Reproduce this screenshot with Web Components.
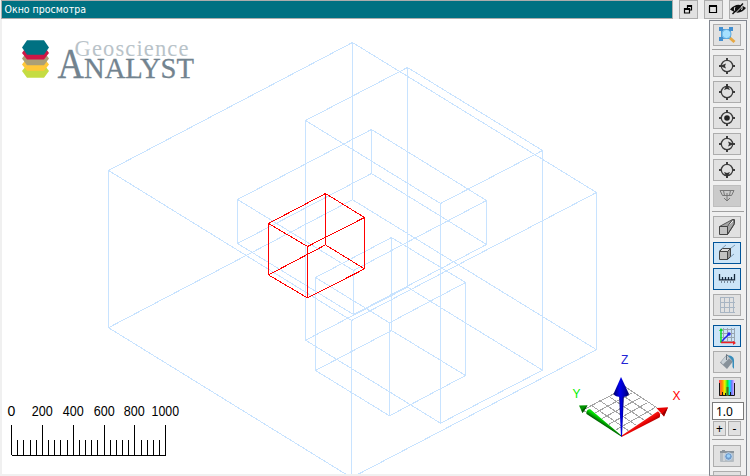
<!DOCTYPE html>
<html lang="ru"><head><meta charset="utf-8"><title>Окно просмотра</title>
<style>html,body{margin:0;width:750px;height:476px;overflow:hidden;background:#f0f0f0;font-family:"Noto Sans",sans-serif}</style></head>
<body><view-window></view-window>
<script>
const define=(name,html,init)=>customElements.define(name,class extends HTMLElement{
  connectedCallback(){
    if(this.shadowRoot)return;
    this.attachShadow({mode:'open'}).innerHTML=typeof html==='function'?html(this):html;
    if(init)init(this.shadowRoot,this);
  }
});

// Cube wireframes: [left, back, right, front] corners of the top face, and the height
const cube=(p,h)=>{
  const q=p.map(([x,y])=>[x,y+h]);
  const ring=a=>'M'+a.map(v=>v.join(' ')).join('L')+'Z';
  return ring(p)+ring(q)+p.map(([x,y])=>`M${x} ${y}V${y+h}`).join('');
};
const pale=[
  [[[108.5,170.5],[352.5,42.5],[596.5,192.5],[351.5,320.5]],157.2],
  [[[305.5,120.5],[407.5,67.5],[542.5,150.5],[440.5,203.5]],219.7],
  [[[237.5,199.5],[371.5,129.5],[486.5,200.5],[353.5,270.5]],44],
  [[[315.5,277.5],[391.5,237.5],[465.5,282.5],[389.5,322.8]],93]
].map(([p,h])=>cube(p,h)).join('');
const red=cube([[268.5,223.5],[325.5,193.5],[364.5,217.5],[307.5,246.5]],51.4);

define('app-logo',`<style>:host{display:block}svg{display:block}text{font-family:"Liberation Serif",serif}</style>
<svg width="180" height="50" viewBox="20 36 180 50">
<path fill="#c5dc42" d="M27 64.500h17l5 6.500-5 6.800H27l-5-6.800z"/><path fill="#ffc739" d="M27 58h17l5 6.500-5 6.300H27l-5-6.300z"/>
<path fill="#ab9f76" d="M27 52h17l5 6.500-5 6.800H27l-5-6.800z"/><path fill="#cf1645" d="M27 46h17l5 7-5 6.500H27l-5-6.500z"/>
<path fill="#007182" d="M27 40.300h17l5 7.200-5 7.200H27l-5-7.200z"/>
<text x="74.500" y="55.500" font-size="22.500" fill="#b9c3c9" textLength="114">Geoscience</text>
<text x="57.500" y="78" font-size="42" fill="#72838f" stroke="#72838f" stroke-width=".3" textLength="26.500" lengthAdjust="spacingAndGlyphs">A</text>
<text x="84" y="78" font-size="29.500" fill="#72838f" stroke="#72838f" stroke-width=".3" textLength="110" lengthAdjust="spacingAndGlyphs">NALYST</text></svg>`);

define('axis-gizmo',`<style>:host{display:block}svg{display:block}text{font:12px "Liberation Sans",sans-serif}</style>
<svg width="130" height="100" viewBox="565 345 130 100">
<defs><linearGradient id="b"><stop stop-color="#000068"/><stop offset=".4" stop-color="#0000f0"/><stop offset=".7" stop-color="#0000b4"/><stop offset="1" stop-color="#000060"/></linearGradient>
<linearGradient id="r" gradientUnits="userSpaceOnUse" x1="657" y1="409" x2="662" y2="417"><stop stop-color="#ff3a30"/><stop offset=".6" stop-color="#e80000"/><stop offset="1" stop-color="#960000"/></linearGradient>
<linearGradient id="g" gradientUnits="userSpaceOnUse" x1="591" y1="408" x2="587" y2="414"><stop stop-color="#00c000"/><stop offset=".4" stop-color="#00e800"/><stop offset="1" stop-color="#006000"/></linearGradient></defs>
<path id="grid" fill="none" stroke="#a5a5a5" shape-rendering="crispEdges"/>
<path fill="#009200" d="M579 405.500l8.500-.3-5 7.800z"/><path fill="#005800" d="M587.500 405.200l-1.500 3-3.500 4.800-1-2.500z"/>
<path fill="url(#g)" stroke="#fff" stroke-width="1" paint-order="stroke" d="M590.500 409.500l31.500 26.500-.5.800-35-22.800c-1-3 2-5.500 4-4.500z"/>
<path fill="#e80000" d="M668 407.200l-11.500.8 7.500 8.500z"/><path fill="#960000" d="M668 407.200l-4 9.300-2-2.500z"/>
<path fill="url(#r)" stroke="#fff" stroke-width="1" paint-order="stroke" d="M657.500 411.500l-36.500 24.500.5.900 38-19.500c1.500-2 0-6.500-2-5.900z"/>
<path fill="url(#b)" d="M619 394h5l-2 42.500h-1z"/><path fill="url(#b)" d="M621 377l8 17q-1 3-7.500 3t-8-3z"/>
<text x="621" y="363.500" fill="#2323d5">Z</text><text x="572.500" y="398" fill="#00f000">Y</text><text x="672.500" y="400" fill="#f00">X</text></svg>`,
root=>{
  // Ground plane: five lines in each direction
  let d='';
  for(let i=0;i<=5;i++){const t=i/5;
    d+=`M${621.5-38.5*t} ${436.500-26.500*t}L${662.500-38.5*t} ${412.500-24*t}M${621.5+41*t} ${436.500-25*t}L${583+41*t} ${410-24*t}`;}
  root.getElementById('grid').setAttribute('d',d);
});

define('scale-bar',`<style>:host{display:block}svg{display:block}text{font:14px "Liberation Sans",sans-serif;text-anchor:middle}</style>
<svg width="190" height="65" viewBox="0 398 190 65"><path id="ticks" fill="none" stroke="#000" shape-rendering="crispEdges"/><g id="labels"></g></svg>`,
root=>{
  let d='M12 455.500H166',s='';
  for(let i=0;i<=25;i++){const x=Math.round(11+i*6.17)+.5;d+=`M${x} ${i%5?440:425}V455`;
    if(i%5===0)s+=`<text x="${x-.2}" y="416" ${i===25?'textLength="27.500"':''} ${i&&i<25?'textLength="21"':''} lengthAdjust="spacingAndGlyphs">${i*40}</text>`;}
  root.getElementById('ticks').setAttribute('d',d);root.getElementById('labels').innerHTML=s;
});

define('scene-view',`<style>:host{display:block;position:relative;width:707px;height:455px;background:#fff;overflow:hidden}
.wire{display:block}app-logo,axis-gizmo,scale-bar{position:absolute}
app-logo{left:18px;top:17px}axis-gizmo{left:563px;top:326px}scale-bar{left:-2px;top:379px}</style>
<svg class="wire" width="707" height="455" viewBox="2 19 707 455" fill="none" shape-rendering="crispEdges"><path stroke="#c8e3ff" d="${pale}"/>
<path stroke="#ff0000" d="${red}"/></svg>
<app-logo></app-logo><axis-gizmo></axis-gizmo><scale-bar></scale-bar>`);

const target='<g fill="none" stroke="#3c3c3c" stroke-width="1.300"><circle cx="14" cy="11" r="5.700"/><path stroke-width="2" d="M14 3v3M14 16v3M6 11h3M19 11h3"/></g>';
const icons={
  zoom:'<path fill="#8fcdf0" stroke="#4f9bd4" d="M8.500 5.500h9v9h-9z"/><circle cx="13.500" cy="10" r="4.500" fill="#a6e0ff" stroke="#5daae0"/><path fill="#438fd0" d="M6 3h4v4H6zM16 3h4v4h-4zM6 13h4v4H6z"/><path stroke="#e6a843" stroke-width="3" d="M17 14l4.500 4"/>',
  left:target+'<path fill="#333" d="M7 11l6-2.500-1 2.500 1 2.500z"/>',
  up:target+'<path fill="#333" d="M14 3l3 6-3-1-3 1z"/>',
  center:target+'<circle cx="14" cy="11" r="2.800" fill="#222"/>',
  right:target+'<path fill="#333" d="M21 11l-6-2.500 1 2.500-1 2.500z"/>',
  down:target+'<path fill="#333" d="M14 19l3-6-3 1-3-1z"/>',
  below:'<path fill="none" stroke="#777" d="M7 5.500h14l-2.500 5h-9zM10.500 5.500l1 5M17.500 5.500l-1 5M14 8v8M11 13l3 3 3-3"/>',
  persp:'<path fill="#a5a5a5" stroke="#555" d="M6.500 10.500l13-7 1.500 1v4l-6.500 10z"/><path fill="#c3c3c3" stroke="#444" d="M6.500 10.500h8v8h-8z"/><path stroke="#eee" d="M15 10l5-5"/><path fill="none" stroke="#444" d="M14.500 10.500l5-7h2v4l-7 11"/>',
  ortho:'<path stroke="#7d9bb5" d="M6 9l7-6M14 9l8-6M15 17l6-5"/><path fill="#ddd" stroke="#444" d="M6.500 9.500l3-3h8l-3 3z"/><path fill="#999" stroke="#444" d="M14.500 9.500l3-3v8l-3 3z"/><path fill="#c3c3c3" stroke="#444" d="M6.500 9.500h8v8h-8z"/>',
  ruler:'<path fill="none" stroke="#16283b" stroke-width="1.300" d="M6.500 6v6h15V6M9.500 9v3M12.500 9v3M15.500 9v3M18.500 9v3"/><path stroke="#78899a" d="M6 12.500h16M8.500 12v3M11.500 12v3M14.500 12v3M17.500 12v3M20.500 12v3"/>',
  grid:'<path fill="none" stroke="#a8b5c3" d="M7.500 3v16M11.500 3v16M16.500 3v16M20.500 3v16M7 3.500h14M7 8.500h15M7 13.500h15M7 18.500h15"/>',
  axes:'<path fill="none" stroke="#98a5b1" d="M10.500 3v15M14.500 3v15M18.500 3v15M7 4.500h14M7 8.500h14M7 12.500h14M7 16.500h14M21.500 3v15"/><path stroke="#2020ef" stroke-width="1.500" d="M8 17l8-8"/><circle cx="16" cy="9" r="1.700" fill="#22e"/><path stroke="#0bdd28" stroke-width="1.500" d="M8 18V4"/><path fill="#0bdd28" d="M6 6l2-3 2 3z"/><path stroke="#ee2025" stroke-width="1.500" d="M8 17.500h14"/><path fill="#ee2025" d="M20 16l3 2-3 2z"/>',
  fill:'<path fill="#87919a" d="M7 11.500l6-7 7 6-6 7.500z"/><path fill="#c9d1d7" d="M8 11l5-6 3 2.500-6 6z"/><path fill="none" stroke="#68737d" d="M13.500 9V3.500l7 6"/><path fill="#378dbb" d="M15 4.500c4 0 6 2 6 5V18l-1.500-2V10z"/>',
  spectrum:'<defs><linearGradient id="s"><stop stop-color="#ff4b60"/><stop offset=".2" stop-color="#ff8a00"/><stop offset=".36" stop-color="#e9f500"/><stop offset=".53" stop-color="#18e52d"/><stop offset=".66" stop-color="#00e6ee"/><stop offset=".8" stop-color="#7373ff"/><stop offset="1" stop-color="#ffd4ff"/></linearGradient></defs><path fill="url(#s)" d="M6 3h16v16H6z"/><path fill="none" stroke="#171717" d="M6.500 6v12.500h15V6M9.500 15v3M12.500 16v2M17.500 15v3"/><path stroke="#52701c" stroke-width="2" d="M14.500 10v9"/>',
  camera:'<rect x="7" y="6" width="14" height="11" rx="1" fill="#b5bcc2"/><path fill="#8c959d" d="M7 6h14v2H7zM9 5h3v1H9z"/><path fill="#cdd2d6" d="M10 8h2v8h-2z"/><circle cx="15.500" cy="11.500" r="3.800" fill="#6f9bcc" stroke="#c0d5e9"/><circle cx="15.500" cy="11" r="1.800" fill="#9bd1fa"/>',
  none:''
};
define('tool-button',el=>`<style>:host{display:block;box-sizing:border-box;width:28px;height:22px;border:1px solid #adadad;background:#e1e1e1;flex:none;overflow:hidden}
:host([on]){background:#cce4f7;border-color:#00549a}:host([off]){background:#cbcbcb;border-color:#bebebe}svg{display:block;margin:-1px}</style><svg width="28" height="22" viewBox="0 0 28 22">${icons[el.getAttribute('icon')]}</svg>`);
define('tool-separator','<style>:host{display:block;width:32px;height:1px;background:#a0a0a0;margin:-1px 0 0 -1px;flex:none}</style>');
define('tool-group','<style>:host{display:flex;flex-direction:column;gap:4px;flex:none}</style><slot></slot>');
define('factor-box',`<style>:host{display:block;width:32px;margin:-1px 0 0 -1px;font-size:12px;color:#000;flex:none}
.value{box-sizing:border-box;height:18px;border:1px solid #7a7a7a;background:#fff;padding-left:3px;line-height:17px;font-size:12px}
.row{display:flex;gap:2px;margin:1px 0 0 1px}.row span{box-sizing:border-box;width:13px;height:15px;border:1px solid #adadad;background:#e1e1e1;text-align:center;line-height:13px}</style>
<div class="value">1.0</div><div class="row"><span>+</span><span>-</span></div>`);
define('tool-rail',`<style>:host{display:flex;flex-direction:column;gap:4px;box-sizing:border-box;width:38px;height:456px;border:1px solid #828790;border-bottom-color:#aaa;padding:3px 0 0 3px;background:#f0f0f0;overflow:hidden}</style>
<tool-group><tool-button icon="zoom"></tool-button></tool-group><tool-separator></tool-separator>
<tool-group style="margin-top:1px">${['left','up','center','right','down'].map(i=>`<tool-button icon="${i}"></tool-button>`).join('')}<tool-button icon="below" off></tool-button></tool-group><tool-separator style="margin-top:0"></tool-separator>
<tool-group><tool-button icon="persp"></tool-button><tool-button icon="ortho" on></tool-button><tool-button icon="ruler" on></tool-button><tool-button icon="grid"></tool-button></tool-group><tool-separator></tool-separator>
<tool-group style="margin-top:1px"><tool-button icon="axes" on></tool-button><tool-button icon="fill"></tool-button><tool-button icon="spectrum"></tool-button></tool-group>
<factor-box></factor-box><tool-separator></tool-separator><tool-group style="margin-top:1px"><tool-button icon="camera"></tool-button><tool-button icon="none"></tool-button></tool-group>`);

const frames={
  restore:'<path fill="none" stroke="#000" stroke-width="1.200" d="M8.500 8V5.500h4V10H11M5.500 8.500H10.500V13H5.500z"/><path stroke="#000" stroke-width="2" d="M8 6h5M5 9h6"/>',
  max:'<path fill="none" stroke="#000" stroke-width="1.200" d="M5.500 6.500h7v6h-7z"/><path stroke="#000" stroke-width="2" d="M5 6h8"/>',
  hide:'<path fill="#111" d="M1 9.500Q8.500 1 17 8Q10 16.500 1 9.500z"/><path fill="none" stroke="#e1e1e1" d="M4.500 15L15.500 4M6 7q-1.500 2 0 4M12.500 6q1.500 2 0 4"/><path stroke="#111" stroke-width="1.500" d="M3.500 14L14 3.500"/>'
};
define('frame-button',el=>`<style>:host{display:block;box-sizing:border-box;width:19px;height:19px;border:1px solid #adadad;background:#e1e1e1;overflow:hidden}svg{display:block;margin:-1px}</style><svg width="19" height="19">${frames[el.getAttribute('icon')]}</svg>`);
define('title-strip',`<style>:host{display:flex;height:19px;padding-left:1px}.title{box-sizing:border-box;width:672px;height:19px;border:1px solid #adadad;background:#007182;color:#fff;padding-left:2.5px;font:10.5px/17px "DejaVu Sans Condensed","DejaVu Sans",sans-serif;font-stretch:condensed;letter-spacing:0;margin-right:6px;white-space:nowrap}
.buttons{display:flex;gap:6px}</style><div class="title"><slot></slot></div><div class="buttons"><frame-button icon="restore"></frame-button><frame-button icon="max"></frame-button><frame-button icon="hide"></frame-button></div>`);
define('view-window',`<style>:host{display:block;width:750px;height:476px;background:#f0f0f0}.body{display:flex;padding-left:2px}tool-rail{margin-top:1px}</style>
<title-strip>Окно просмотра</title-strip><div class="body"><scene-view></scene-view><tool-rail></tool-rail></div>`);
</script></body></html>
